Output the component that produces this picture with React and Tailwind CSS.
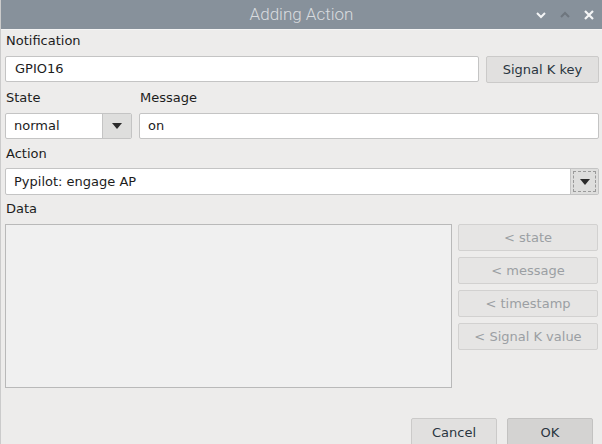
import React from 'react';

const font = { fontFamily: '"DejaVu Sans", sans-serif' };

function Arrow() {
  return (
    <svg width="10" height="6" viewBox="0 0 10 6">
      <path d="M0 0 H10 L5 6 Z" fill="#2b2b2b" />
    </svg>
  );
}

function Label({ children }) {
  return <div className="h-[16px] leading-[16px] text-[13px] text-[#1c1c1c] pl-px">{children}</div>;
}

function SideButton({ children }) {
  return (
    <div className="h-[27px] flex items-center justify-center bg-[#e6e5e4] border border-[#d2d1d0] rounded-[2px] text-[13px] text-[#9b9fa3]">
      {children}
    </div>
  );
}

export default function App() {
  return (
    <div className="w-[602px] h-[444px] overflow-hidden bg-[#edeceb] border-l border-[#cbcbcb] flex flex-col" style={font}>
      {/* Title bar */}
      <div className="h-[30px] shrink-0 bg-[#87919b] relative flex items-center justify-center border-b border-[#f4f4f4]">
        <span className="text-[17px] text-[#d9dcdf] font-light" style={{ fontFamily: 'Roboto, sans-serif' }}>Adding Action</span>
        <div className="absolute right-[8px] top-0 h-full flex items-center gap-[14px]">
          <svg width="10" height="8" viewBox="0 0 10 8"><path d="M1 2 L5 6 L9 2" stroke="#f4f5f6" strokeWidth="2" fill="none" /></svg>
          <svg width="10" height="8" viewBox="0 0 10 8"><path d="M1 6 L5 2 L9 6" stroke="#6e767e" strokeWidth="2" fill="none" /></svg>
          <svg width="10" height="10" viewBox="0 0 10 10"><path d="M1 1 L9 9 M9 1 L1 9" stroke="#f4f5f6" strokeWidth="2.2" fill="none" /></svg>
        </div>
      </div>

      <div className="pl-[4px] pr-[3px] pt-[3px] flex flex-col">
        <Label>Notification</Label>
        <div className="mt-[7px] flex gap-[7px]">
          <div className="flex-1 h-[26px] bg-white border border-[#c4c4c4] rounded-[2px] flex items-center pl-[9px] text-[13px] text-[#1c1c1c]">GPIO16</div>
          <div className="w-[113px] h-[27px] bg-[#e1e0df] border border-[#cbcac9] rounded-[2px] flex items-center justify-center text-[13px] text-[#2a3540]">Signal K key</div>
        </div>

        <div className="mt-[7px] flex gap-[7px]">
          <div className="w-[127px] flex flex-col">
            <Label>State</Label>
            <div className="mt-[7px] h-[26px] flex bg-white border border-[#c4c4c4] rounded-[2px] overflow-hidden">
              <div className="flex-1 flex items-center pl-[8px] text-[13px] text-[#1c1c1c]">normal</div>
              <div className="w-[29px] bg-[#dededd] border-l border-[#c4c4c4] flex items-center justify-center"><Arrow /></div>
            </div>
          </div>
          <div className="flex-1 flex flex-col">
            <Label>Message</Label>
            <div className="mt-[7px] h-[26px] bg-white border border-[#c4c4c4] rounded-[2px] flex items-center pl-[8px] text-[13px] text-[#1c1c1c]">on</div>
          </div>
        </div>

        <div className="mt-[7px]"><Label>Action</Label></div>
        <div className="mt-[6px] h-[27px] flex bg-white border border-[#c4c4c4] rounded-[2px]">
          <div className="flex-1 flex items-center pl-[8px] text-[13px] text-[#1c1c1c]">Pypilot: engage AP</div>
          <div className="w-[28px] bg-[#dededd] border-l border-[#c4c4c4] p-[2px]">
            <div className="h-full border border-dashed border-[#9a9a9a] flex items-center justify-center"><Arrow /></div>
          </div>
        </div>

        <div className="mt-[6px]"><Label>Data</Label></div>
        <div className="mt-[7px] flex gap-[6px]">
          <div className="w-[447px] h-[164px] bg-[#f0f0f0] border border-[#b9b9b9]"></div>
          <div className="flex-1 flex flex-col gap-[6px] pr-[1px]">
            <SideButton>&lt; state</SideButton>
            <SideButton>&lt; message</SideButton>
            <SideButton>&lt; timestamp</SideButton>
            <SideButton>&lt; Signal K value</SideButton>
          </div>
        </div>

        <div className="mt-[30px] flex justify-end gap-[10px] pr-[6px]">
          <div className="w-[86px] h-[30px] bg-[#e1e0df] border border-[#cbcac9] rounded-[2px] flex items-center justify-center text-[13px] text-[#2a3540]">Cancel</div>
          <div className="w-[86px] h-[30px] bg-[#d4d3d2] border border-[#c3c2c1] rounded-[2px] flex items-center justify-center text-[13px] text-[#2a3540]">OK</div>
        </div>
      </div>
    </div>
  );
}
